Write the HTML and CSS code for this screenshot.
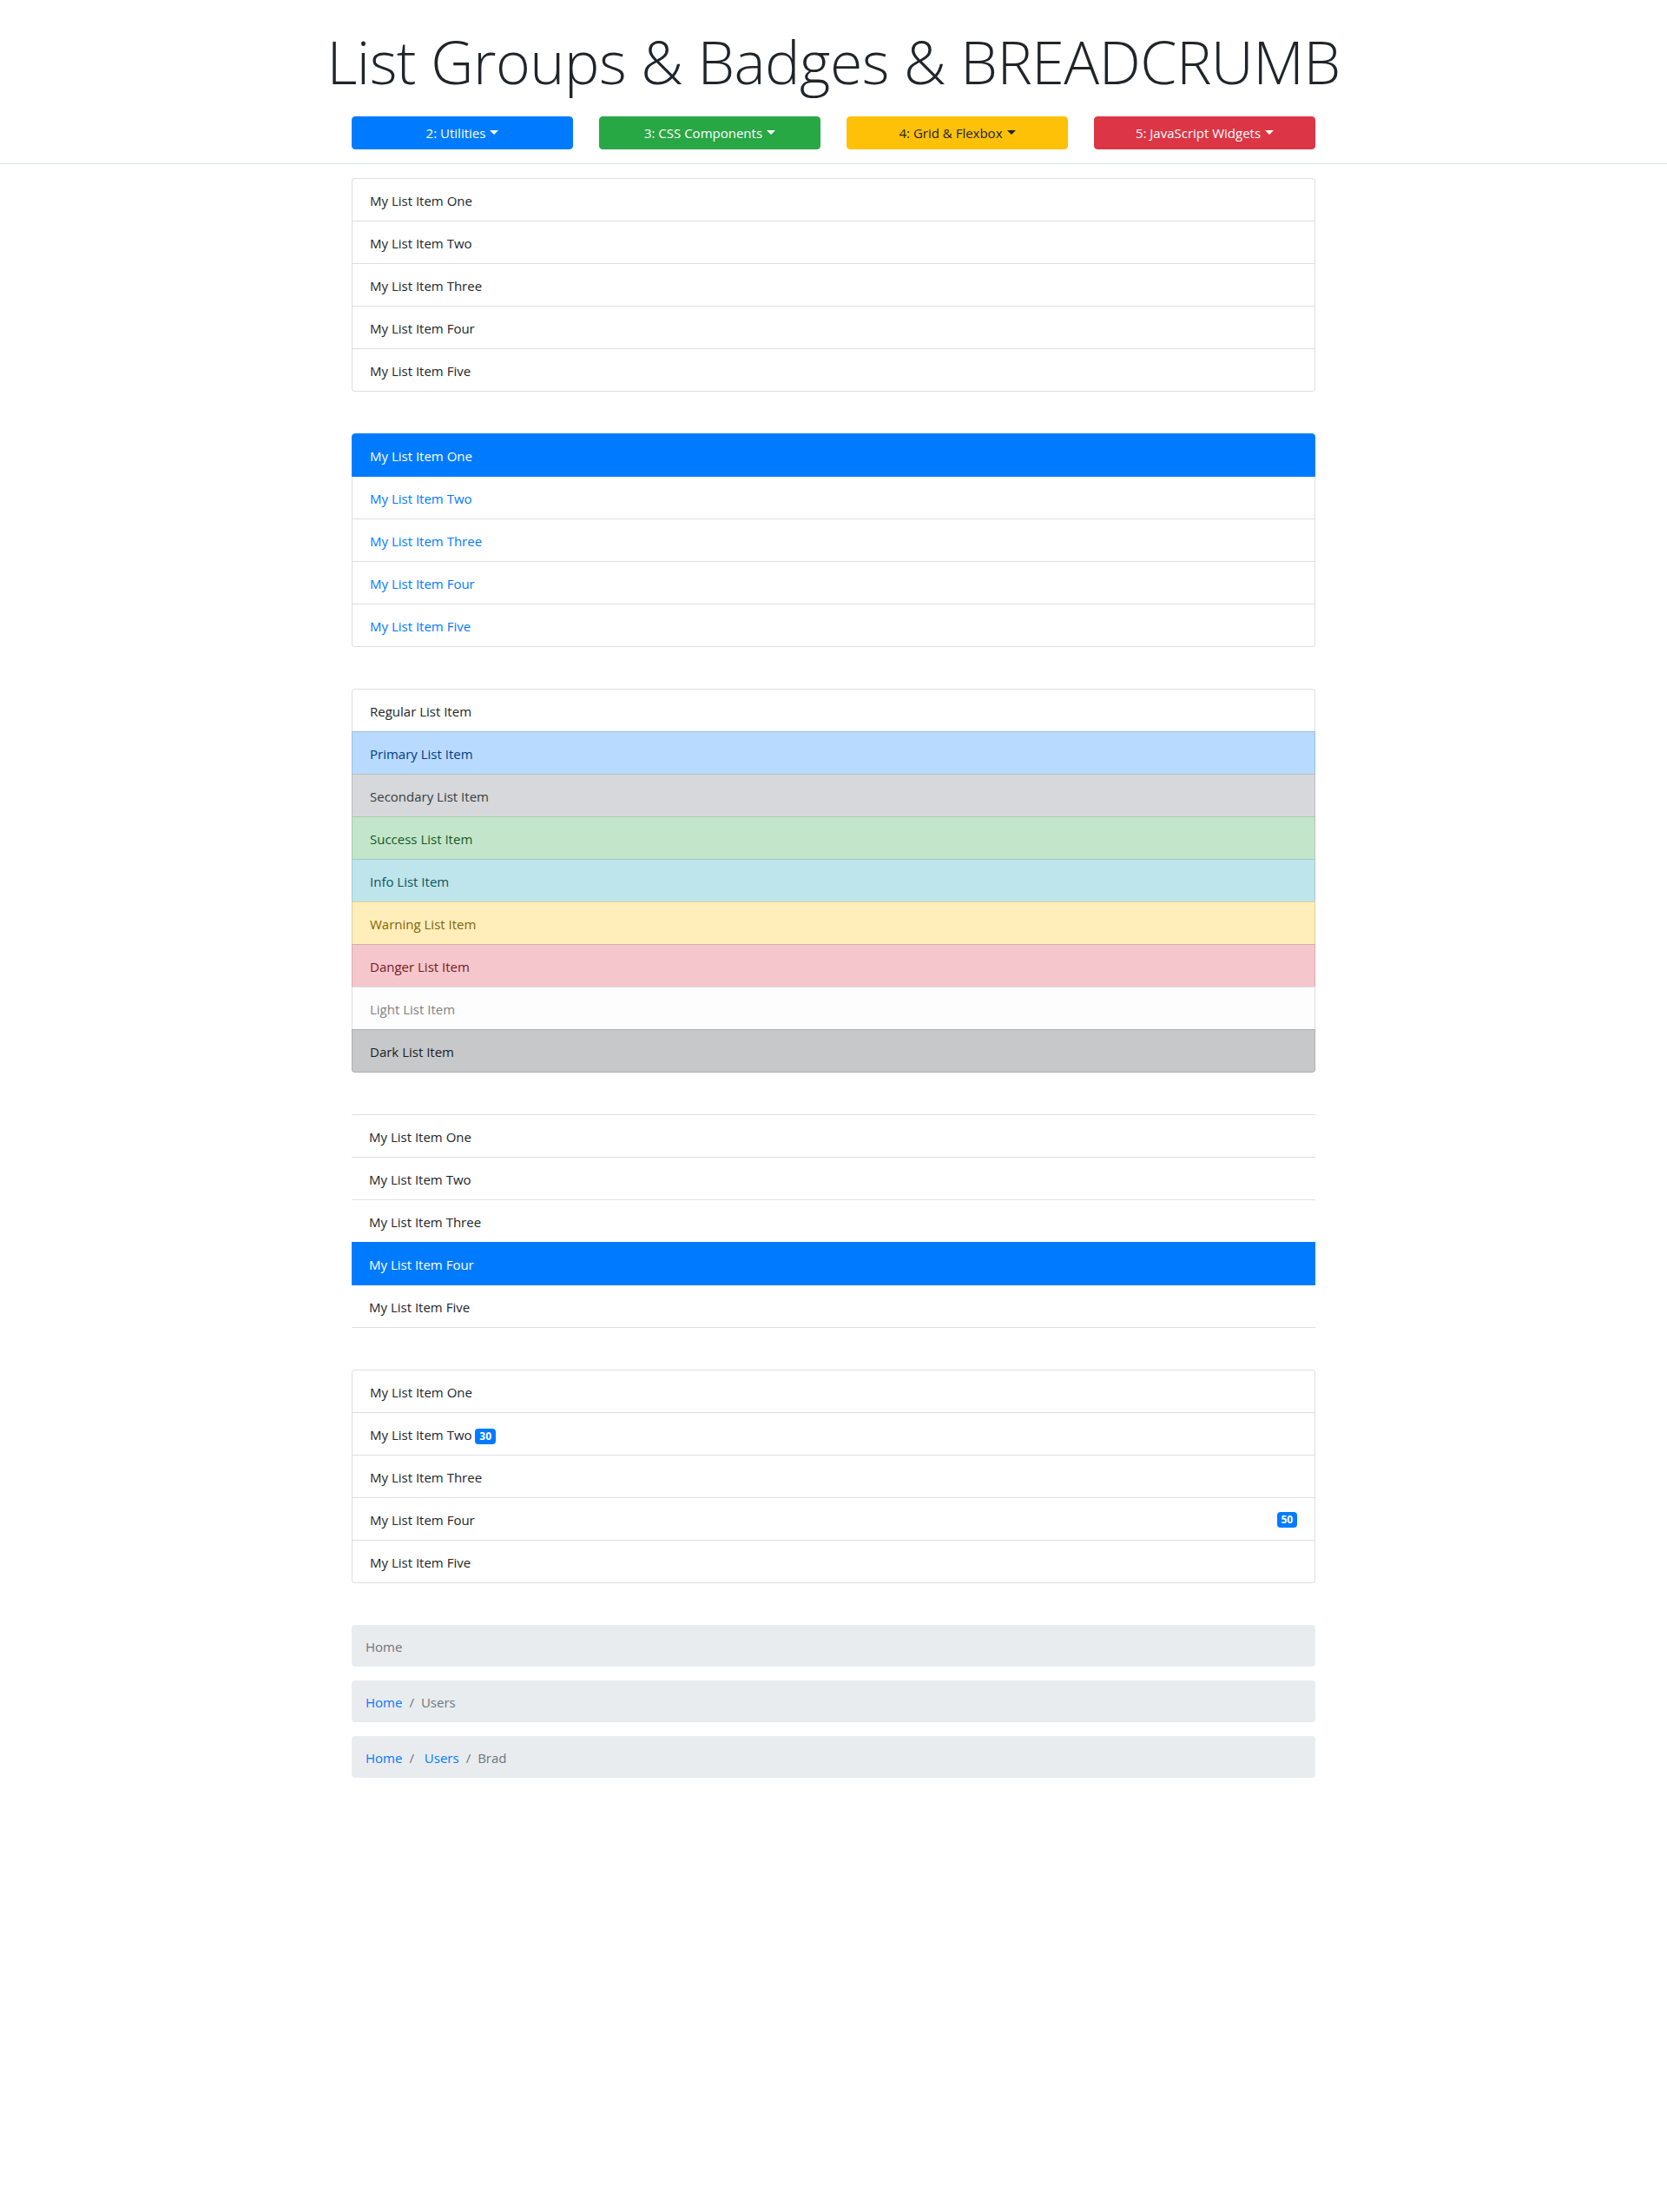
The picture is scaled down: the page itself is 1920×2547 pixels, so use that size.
FILE: index.html
```html
<!DOCTYPE html>
<html lang="en">
<head>
<meta charset="utf-8">
<title>List Groups &amp; Badges &amp; BREADCRUMB</title>
<link rel="stylesheet" href="styles.css">
</head>
<body>
<header class="masthead">
  <h1 class="title">List Groups &amp; Badges &amp; BREADCRUMB</h1>
  <div class="container">
    <nav class="menu">
      <a class="btn btn-primary caret" href="#">2: Utilities</a>
      <a class="btn btn-success caret" href="#">3: CSS Components</a>
      <a class="btn btn-warning caret" href="#">4: Grid &amp; Flexbox</a>
      <a class="btn btn-danger caret" href="#">5: JavaScript Widgets</a>
    </nav>
  </div>
</header>

<main class="container content">
  <ul class="list">
    <li class="item">My List Item One</li>
    <li class="item">My List Item Two</li>
    <li class="item">My List Item Three</li>
    <li class="item">My List Item Four</li>
    <li class="item">My List Item Five</li>
  </ul>

  <div class="list">
    <a class="item item-link active" href="#">My List Item One</a>
    <a class="item item-link" href="#">My List Item Two</a>
    <a class="item item-link" href="#">My List Item Three</a>
    <a class="item item-link" href="#">My List Item Four</a>
    <a class="item item-link" href="#">My List Item Five</a>
  </div>

  <ul class="list">
    <li class="item">Regular List Item</li>
    <li class="item item-primary">Primary List Item</li>
    <li class="item item-secondary">Secondary List Item</li>
    <li class="item item-success">Success List Item</li>
    <li class="item item-info">Info List Item</li>
    <li class="item item-warning">Warning List Item</li>
    <li class="item item-danger">Danger List Item</li>
    <li class="item item-light">Light List Item</li>
    <li class="item item-dark">Dark List Item</li>
  </ul>

  <ul class="list list-flush">
    <li class="item">My List Item One</li>
    <li class="item">My List Item Two</li>
    <li class="item">My List Item Three</li>
    <li class="item active">My List Item Four</li>
    <li class="item">My List Item Five</li>
  </ul>

  <ul class="list">
    <li class="item">My List Item One</li>
    <li class="item">My List Item Two <span class="badge">30</span></li>
    <li class="item">My List Item Three</li>
    <li class="item item-split">My List Item Four <span class="badge">50</span></li>
    <li class="item">My List Item Five</li>
  </ul>

  <ol class="breadcrumb">
    <li class="crumb current">Home</li>
  </ol>
  <ol class="breadcrumb">
    <li class="crumb"><a href="#">Home</a></li>
    <li class="crumb current">Users</li>
  </ol>
  <ol class="breadcrumb">
    <li class="crumb"><a href="#">Home</a></li>
    <li class="crumb"> <a href="#">Users</a></li>
    <li class="crumb current">Brad</li>
  </ol>
</main>
</body>
</html>
```

FILE: styles.css
```css
*,
*::before,
*::after {
  box-sizing: border-box;
}

body {
  margin: 0;
  font-family: "Open Sans", "Noto Sans", sans-serif;
  font-size: 15px;
  line-height: 24px;
  color: #212529;
  background: #fff;
}

a {
  text-decoration: none;
}

.container {
  max-width: 1140px;
  margin: 0 auto;
  padding: 0 15px;
}

.masthead {
  padding: 28px 0 16px;
  border-bottom: 1px solid #dee2e6;
  text-align: center;
}

.title {
  margin: 0 0 20px;
  font-size: 68px;
  font-weight: 300;
  line-height: 86.4px;
  letter-spacing: -0.5px;
  white-space: nowrap;
}

.menu {
  display: grid;
  grid-template-columns: repeat(4, 1fr);
  gap: 30px;
}

.btn {
  display: block;
  padding: 6px 12px;
  border: 1px solid transparent;
  border-radius: 4px;
  font-size: 15px;
  line-height: 24px;
  text-align: center;
  color: #fff;
}

.caret::after {
  content: "";
  display: inline-block;
  margin-left: 5px;
  vertical-align: 4px;
  border-top: 5px solid;
  border-right: 5px solid transparent;
  border-left: 5px solid transparent;
}

.btn-primary { background: #007bff; border-color: #007bff; }
.btn-success { background: #28a745; border-color: #28a745; }
.btn-warning { background: #ffc107; border-color: #ffc107; color: #212529; }
.btn-danger { background: #dc3545; border-color: #dc3545; }

.content {
  padding-top: 16px;
}

.list {
  display: flex;
  flex-direction: column;
  margin: 0 0 48px;
  padding: 0;
  list-style: none;
}

.item {
  position: relative;
  display: block;
  margin-bottom: -1px;
  padding: 13px 20px 11px;
  background: #fff;
  border: 1px solid rgba(0, 0, 0, 0.125);
}

.item:first-child {
  border-top-left-radius: 4px;
  border-top-right-radius: 4px;
}

.item:last-child {
  margin-bottom: 0;
  border-bottom-left-radius: 4px;
  border-bottom-right-radius: 4px;
}

.item-link {
  color: #007bff;
}

.item.active {
  z-index: 2;
  color: #fff;
  background: #007bff;
  border-color: #007bff;
}

.item-primary { color: #004085; background: #b8daff; }
.item-secondary { color: #383d41; background: #d6d8db; }
.item-success { color: #155724; background: #c3e6cb; }
.item-info { color: #0c5460; background: #bee5eb; }
.item-warning { color: #856404; background: #ffeeba; }
.item-danger { color: #721c24; background: #f5c6cb; }
.item-light { color: #818182; background: #fdfdfe; }
.item-dark { color: #1b1e21; background: #c6c8ca; }

.list-flush .item {
  border-left: 0;
  border-right: 0;
  border-radius: 0;
}

.item-split {
  display: flex;
  justify-content: space-between;
  align-items: center;
}

.badge {
  display: inline-block;
  padding: 3px 4.8px;
  font-size: 12px;
  font-weight: 700;
  line-height: 12px;
  text-align: center;
  white-space: nowrap;
  vertical-align: baseline;
  color: #fff;
  background: #007bff;
  border-radius: 4px;
}

.breadcrumb {
  display: flex;
  flex-wrap: wrap;
  margin: 0 0 16px;
  padding: 13px 16px 11px;
  list-style: none;
  background: #e9ecef;
  border-radius: 4px;
}

.crumb a {
  color: #007bff;
}

.crumb + .crumb {
  padding-left: 8px;
}

.crumb + .crumb::before {
  content: "/";
  display: inline-block;
  padding-right: 8px;
  color: #6c757d;
}

.crumb.current {
  color: #6c757d;
}
```
